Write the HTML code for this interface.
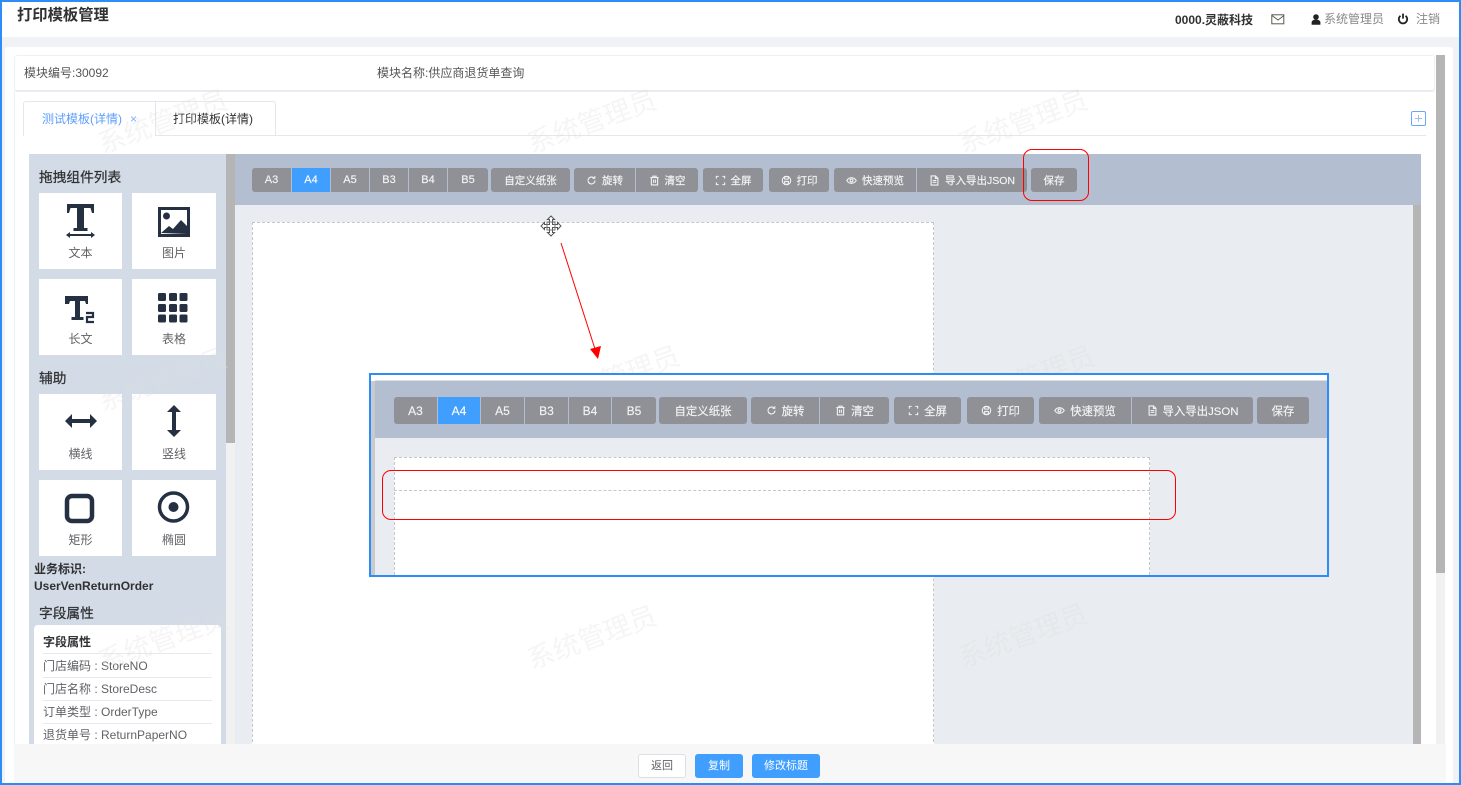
<!DOCTYPE html>
<html lang="zh"><head><meta charset="utf-8"><title>打印模板管理</title>
<style>
*{box-sizing:border-box}
html,body{margin:0;padding:0;width:1461px;height:785px;overflow:hidden;background:#fff}
body{position:relative;font-family:"Liberation Sans","Noto Sans CJK SC",sans-serif;font-size:12px;color:#606266;filter:blur(.3px)}
.a{position:absolute}
.t{position:absolute;white-space:nowrap;line-height:16px}
.b{position:absolute;display:flex;align-items:center;justify-content:center;background:#8f9197;color:#f4f4f4;white-space:nowrap;height:24px;top:168px;font-size:10.5px;border-radius:3px;gap:5px;-webkit-text-stroke:.15px #f4f4f4}
.n{font-size:11px}
.l{border-radius:3px 0 0 3px}.m{border-radius:0}.r{border-radius:0 3px 3px 0}
.on{background:#409eff;color:#fff}
.o .b{height:27px;top:397px;font-size:11.4px;gap:5px}
.o .n{font-size:12px}
.b svg{width:11px;height:11px;fill:none;stroke:#f2f2f2;stroke-width:1.2}
.c{position:absolute;background:#fff;width:84px;height:76px;text-align:center;font-size:12px;color:#606266}
.c span{position:absolute;left:0;right:0;top:52px;line-height:16px}
.c svg{position:absolute;left:0;top:0;width:84px;height:52px;fill:#253043}
.h{position:absolute;white-space:nowrap;font-size:13.7px;line-height:18px;color:#303133;-webkit-text-stroke:.25px #303133}
.w{position:absolute;white-space:nowrap;font-size:27px;line-height:34px;color:rgba(222,222,222,.3);transform:translate(-50%,-50%) rotate(-20deg);z-index:5;pointer-events:none}
.f{position:absolute;left:43px;white-space:nowrap;font-size:12px;line-height:16px;color:#606266}
.ln{position:absolute;left:43px;width:169px;height:1px;background:#e6e9ee}
</style></head><body>
<svg width="0" height="0" style="position:absolute"><defs>
<symbol id="i-rot" viewBox="0 0 12 12"><path d="M9.800 6a3.800 3.800 0 1 1-1.200-2.800"/><path d="M9.600 1.200v2.400H7.200"/></symbol>
<symbol id="i-del" viewBox="0 0 12 12"><path d="M1.500 2.800h9M4.200 2.800V1.300h3.600v1.500M2.600 2.800v8h6.800v-8M5 5v3.600M7 5v3.600"/></symbol>
<symbol id="i-full" viewBox="0 0 12 12"><path d="M1.500 4V1.500H4M8 1.500h2.500V4M10.500 8v2.500H8M4 10.500H1.500V8"/></symbol>
<symbol id="i-print" viewBox="0 0 12 12"><circle cx="6" cy="6" r="4.600"/><path d="M3.500 4.500h5M4 7h4v3.200H4zM4 4.500V1.800h4v2.700"/></symbol>
<symbol id="i-eye" viewBox="0 0 12 12"><path d="M.8 6C2.200 3.800 4 2.900 6 2.900S9.800 3.800 11.200 6C9.800 8.200 8 9.100 6 9.100S2.200 8.200.8 6z"/><circle cx="6" cy="6" r="1.600"/></symbol>
<symbol id="i-doc" viewBox="0 0 12 12"><path d="M2.300 1h4.900l2.500 2.500V11H2.300zM7 1v2.700h2.700M4 6h4M4 8h4"/></symbol>
</defs></svg>

<!-- header -->
<div class="a" style="left:0;top:37px;width:1461px;height:748px;background:#f0f2f5"></div>
<div class="t" style="left:17px;top:7px;font-size:15.3px;line-height:18px;font-weight:bold;color:#303133">打印模板管理</div>
<div class="t" style="left:1175px;top:12px;font-size:12px;font-weight:bold;color:#303133">0000.灵蔽科技</div>
<svg class="a" style="left:1271px;top:14px" width="14" height="11" viewBox="0 0 14 11" fill="none" stroke="#5a5a50" stroke-width="1"><rect x=".8" y=".8" width="12" height="9"/><path d="M1 1.500l6 4.500 6-4.500"/></svg>
<svg class="a" style="left:1311px;top:14px" width="10" height="11" viewBox="0 0 10 11" fill="#222"><circle cx="5" cy="3" r="2.800"/><path d="M.6 10.800V8.500C.6 6.600 2.500 5.600 5 5.600s4.400 1 4.400 2.900v2.300z"/></svg>
<div class="t" style="left:1324px;top:11px;color:#888">系统管理员</div>
<svg class="a" style="left:1397px;top:13px" width="12" height="12" viewBox="0 0 12 12" fill="none" stroke="#222" stroke-width="1.800"><path d="M3.500 2.800a4.200 4.200 0 1 0 5 0M6 .6v5"/></svg>
<div class="t" style="left:1416px;top:11px;color:#888">注销</div>

<!-- main card -->
<div class="a" style="left:5px;top:47px;width:1448px;height:736px;background:#fff;border-radius:3px 3px 0 0"></div>
<div class="a" style="left:14px;top:55px;width:1421px;height:37px;background:#fff;border:1px solid #eef0f4;border-bottom:2px solid #e8ebf0;border-radius:3px"></div>
<div class="t" style="left:24px;top:65px;color:#555">模块编号:30092</div>
<div class="t" style="left:377px;top:65px;color:#555">模块名称:供应商退货单查询</div>
<div class="a" style="left:14px;top:92px;width:1px;height:652px;background:#eef0f4"></div>
<div class="a" style="left:1436px;top:55px;width:9px;height:518px;background:#b5b5b5"></div>
<div class="a" style="left:1436px;top:573px;width:9px;height:171px;background:#f1f1f1"></div>

<!-- tabs -->
<div class="a" style="left:23px;top:135px;width:1403px;height:1px;background:#e4e7ed"></div>
<div class="a" style="left:23px;top:101px;width:133px;height:35px;background:#fff;border:1px solid #e4e7ed;border-bottom:0;border-radius:3px 0 0 0"></div>
<div class="a" style="left:155px;top:101px;width:121px;height:35px;border:1px solid #e4e7ed;border-bottom:0;border-radius:0 3px 0 0"></div>
<div class="t" style="left:42px;top:111px;color:#5d9ffb">测试模板(详情)</div>
<div class="t" style="left:130px;top:111px;color:#7fb0f5;font-size:12px">×</div>
<div class="t" style="left:173px;top:111px;color:#303133">打印模板(详情)</div>
<div class="a" style="left:1411px;top:111px;width:15px;height:15px;border:1.500px solid #6aa6f8;border-radius:2px"></div>
<div class="a" style="left:1415px;top:118px;width:7px;height:1px;background:#9dbdf0"></div>
<div class="a" style="left:1418px;top:115px;width:1px;height:7px;background:#9dbdf0"></div>

<!-- sidebar -->
<div class="a" style="left:29px;top:154px;width:197px;height:590px;background:#d3dbe6"></div>
<div class="a" style="left:226px;top:154px;width:9px;height:289px;background:#b5b5b5"></div>
<div class="a" style="left:226px;top:443px;width:9px;height:301px;background:#f1f1f1"></div>
<div class="h" style="left:39px;top:169px">拖拽组件列表</div>

<div class="c" style="left:39px;top:193px;width:83px"><svg viewBox="0 0 84 52"><path d="M28 11h27v9h-2l-1.500-5H45v20h3.500v3h-14v-3H38V15h-6.500L30 20h-2z"/><path d="M27 42l4-3v2h21v-2l4 3-4 3v-2H31v2z"/></svg><span>文本</span></div>
<div class="c" style="left:132px;top:193px"><svg viewBox="0 0 84 52"><path fill-rule="evenodd" d="M26 14h32v30H26zM29 17v24h26V17z"/><circle cx="34.500" cy="23" r="3.500"/><path d="M29 40l8-7 4 3 8-9 6 6v8z"/></svg><span>图片</span></div>
<div class="c" style="left:39px;top:279px;width:83px"><svg viewBox="0 0 84 52"><path d="M26 17h23v8h-2l-1-3h-5v16h3.500v3H32.500v-3H36V22h-5l-1 3h-4z"/><path fill="none" stroke="#253043" stroke-width="2.200" d="M47 34h7v4h-6v5h7"/></svg><span>长文</span></div>
<div class="c" style="left:132px;top:279px"><svg viewBox="0 0 84 52"><g><rect x="26" y="14" width="8" height="8" rx="1.500"/><rect x="37" y="14" width="8" height="8" rx="1.500"/><rect x="47.500" y="14" width="8" height="8" rx="1.500"/><rect x="26" y="25" width="8" height="8" rx="1.500"/><rect x="37" y="25" width="8" height="8" rx="1.500"/><rect x="47.500" y="25" width="8" height="8" rx="1.500"/><rect x="26" y="35.500" width="8" height="8" rx="1.500"/><rect x="37" y="35.500" width="8" height="8" rx="1.500"/><rect x="47.500" y="35.500" width="8" height="8" rx="1.500"/></g></svg><span>表格</span></div>

<div class="h" style="left:39px;top:370px">辅助</div>
<div class="c" style="left:39px;top:394px;width:83px"><svg viewBox="0 0 84 52"><path d="M26 27l7-7v5h18v-5l7 7-7 7v-5H33v5z"/></svg><span>横线</span></div>
<div class="c" style="left:132px;top:394px"><svg viewBox="0 0 84 52"><path d="M42 11l7 7h-5v18h5l-7 7-7-7h5V18h-5z"/></svg><span>竖线</span></div>
<div class="c" style="left:39px;top:480px;width:83px"><svg viewBox="0 0 84 52"><rect x="28" y="16" width="25" height="25" rx="5" fill="none" stroke="#253043" stroke-width="4.500"/></svg><span>矩形</span></div>
<div class="c" style="left:132px;top:480px"><svg viewBox="0 0 84 52"><circle cx="41.500" cy="27" r="14" fill="none" stroke="#253043" stroke-width="3.500"/><circle cx="41.500" cy="27" r="5"/></svg><span>椭圆</span></div>

<div class="t" style="left:34px;top:561px;font-weight:bold;color:#303133">业务标识:</div>
<div class="t" style="left:34px;top:578px;font-weight:bold;color:#303133">UserVenReturnOrder</div>
<div class="h" style="left:39px;top:605px">字段属性</div>
<div class="a" style="left:34px;top:625px;width:187px;height:119px;background:#fff;border-radius:4px 4px 0 0"></div>
<div class="f" style="top:634px;font-weight:bold;color:#303133">字段属性</div>
<div class="ln" style="top:653px"></div>
<div class="f" style="top:658px">门店编码 : StoreNO</div>
<div class="ln" style="top:677px"></div>
<div class="f" style="top:681px">门店名称 : StoreDesc</div>
<div class="ln" style="top:700px"></div>
<div class="f" style="top:704px">订单类型 : OrderType</div>
<div class="ln" style="top:723px"></div>
<div class="f" style="top:727px">退货单号 : ReturnPaperNO</div>

<!-- designer -->
<div class="a" style="left:235px;top:154px;width:1186px;height:51px;background:#b3bfd0"></div>
<div class="a" style="left:235px;top:205px;width:1178px;height:539px;background:#e9edf1"></div>
<div class="a" style="left:1413px;top:205px;width:8px;height:539px;background:#b5b5b5"></div>
<div class="a" style="left:252px;top:222px;width:682px;height:530px;background:#fff;border:1px dashed #c4c6ca"></div>

<div class="b l n" style="left:252px;width:39px">A3</div>
<div class="b m on n" style="left:292px;width:38px">A4</div>
<div class="b m n" style="left:331px;width:38px">A5</div>
<div class="b m n" style="left:370px;width:38px">B3</div>
<div class="b m n" style="left:409px;width:38px">B4</div>
<div class="b r n" style="left:448px;width:40px">B5</div>
<div class="b" style="left:491px;width:79px">自定义纸张</div>
<div class="b l" style="left:574px;width:61px"><svg><use href="#i-rot"/></svg>旋转</div>
<div class="b r" style="left:636px;width:62px"><svg><use href="#i-del"/></svg>清空</div>
<div class="b" style="left:703px;width:60px"><svg><use href="#i-full"/></svg>全屏</div>
<div class="b" style="left:769px;width:60px"><svg><use href="#i-print"/></svg>打印</div>
<div class="b l" style="left:834px;width:82px"><svg><use href="#i-eye"/></svg>快速预览</div>
<div class="b r" style="left:917px;width:110px"><svg><use href="#i-doc"/></svg>导入导出JSON</div>
<div class="b" style="left:1031px;width:46px">保存</div>

<!-- footer -->
<div class="a" style="left:14px;top:744px;width:1432px;height:39px;background:#f7f7f7;z-index:6"></div>
<div class="a" style="left:638px;top:754px;width:48px;height:24px;background:#fff;border:1px solid #dcdfe6;border-radius:3px;font-size:11px;line-height:22px;text-align:center;color:#606266;z-index:6">返回</div>
<div class="a" style="left:695px;top:754px;width:48px;height:24px;background:#409eff;border-radius:3px;font-size:11px;line-height:24px;text-align:center;color:#fff;z-index:6">复制</div>
<div class="a" style="left:752px;top:754px;width:68px;height:24px;background:#409eff;border-radius:3px;font-size:11px;line-height:24px;text-align:center;color:#fff;z-index:6">修改标题</div>

<!-- watermarks -->
<div class="w" style="left:163px;top:122px">系统管理员</div>
<div class="w" style="left:592px;top:122px">系统管理员</div>
<div class="w" style="left:1023px;top:122px">系统管理员</div>
<div class="w" style="left:163px;top:380px">系统管理员</div>
<div class="w" style="left:615px;top:378px">系统管理员</div>
<div class="w" style="left:1030px;top:378px">系统管理员</div>
<div class="w" style="left:163px;top:640px">系统管理员</div>
<div class="w" style="left:592px;top:638px">系统管理员</div>
<div class="w" style="left:1023px;top:636px">系统管理员</div>

<!-- overlay -->
<div class="o" style="position:absolute;left:0;top:0;width:1461px;height:785px;z-index:7">
<div class="a" style="left:369px;top:373px;width:960px;height:204px;background:#fff;border:2px solid #2d8cf5"></div>
<div class="a" style="left:371px;top:381px;width:4px;height:194px;background:#c8cacc"></div>
<div class="a" style="left:375px;top:380px;width:952px;height:1px;background:#dcdfe3"></div>
<div class="a" style="left:375px;top:381px;width:952px;height:57px;background:#b3bfd0"></div>
<div class="a" style="left:375px;top:438px;width:952px;height:137px;background:#e9edf1"></div>
<div class="a" style="left:394px;top:457px;width:756px;height:118px;background:#fff;border:1px dashed #c4c6ca;border-bottom:0"></div>
<div class="a" style="left:394px;top:490px;width:756px;height:0;border-top:1px dashed #c4c6ca"></div>
<div class="b l n" style="left:394px;width:43px">A3</div>
<div class="b m on n" style="left:438px;width:42px">A4</div>
<div class="b m n" style="left:481px;width:43px">A5</div>
<div class="b m n" style="left:525px;width:43px">B3</div>
<div class="b m n" style="left:569px;width:42px">B4</div>
<div class="b r n" style="left:612px;width:44px">B5</div>
<div class="b" style="left:659px;width:88px">自定义纸张</div>
<div class="b l" style="left:751px;width:68px"><svg><use href="#i-rot"/></svg>旋转</div>
<div class="b r" style="left:820px;width:69px"><svg><use href="#i-del"/></svg>清空</div>
<div class="b" style="left:894px;width:67px"><svg><use href="#i-full"/></svg>全屏</div>
<div class="b" style="left:967px;width:67px"><svg><use href="#i-print"/></svg>打印</div>
<div class="b l" style="left:1039px;width:92px"><svg><use href="#i-eye"/></svg>快速预览</div>
<div class="b r" style="left:1132px;width:121px"><svg><use href="#i-doc"/></svg>导入导出JSON</div>
<div class="b" style="left:1257px;width:52px">保存</div>
<div class="a" style="left:382px;top:470px;width:794px;height:50px;border:1px solid #f00;border-radius:9px"></div>
</div>

<!-- annotations -->
<div class="a" style="left:1023px;top:149px;width:66px;height:52px;border:1px solid #f00;border-radius:9px;z-index:8"></div>
<svg class="a" style="left:0;top:0;z-index:8" width="1461" height="785">
<path d="M561 243L595 349" stroke="#f00" stroke-width="1" fill="none"/>
<path d="M598 359L590 349L601 346z" fill="#f00"/>
<g transform="translate(551 226)" fill="#fff" stroke="#555" stroke-width="1"><path d="M0-10l3.500 3.500h-2v5h5v-2L10 0 6.500 3.500v-2h-5v5h2L0 10l-3.500-3.500h2v-5h-5v2L-10 0l3.500-3.500v2h5v-5h-2z"/><path d="M-4-4h8v8h-8z" fill="none" stroke="#777"/></g>
</svg>

<!-- window frame -->
<div class="a" style="left:0;top:0;width:1461px;height:785px;border:2px solid #2d8cf5;z-index:9;pointer-events:none"></div>
</body></html>
